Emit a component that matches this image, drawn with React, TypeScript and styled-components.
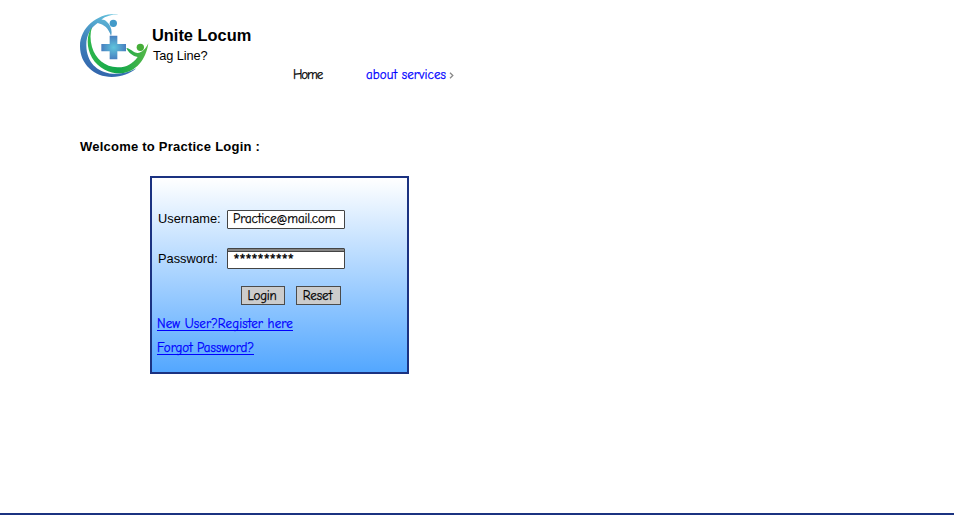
import React from "react";
import styled, { createGlobalStyle } from "styled-components";

const GlobalStyle = createGlobalStyle`
  * { box-sizing: border-box; }
  body { margin: 0; background: #fff; overflow: hidden; }
`;

const sans = `"Liberation Sans", Arial, sans-serif`;
const casual = `"Comic Sans MS", "Comic Neue", Lato, sans-serif`;

const Page = styled.div`
  display: flex;
  flex-direction: column;
  width: 954px;
  height: 526px;
  background: #fff;
  color: #000;
  font: 12px ${sans};
  white-space: nowrap;
`;

const Header = styled.header`
  display: flex;
  height: 86px;
  padding: 13px 0 0 80px;
`;

const Logo = styled.svg`
  width: 70px;
  height: 64px;
  flex: none;
`;

const Brand = styled.div`
  width: 141px;
  padding: 12px 0 0 2px;
`;

const BrandName = styled.h1`
  margin: 0;
  font: bold 16.4px/21px ${sans};
`;

const TagLine = styled.p`
  margin: 0 0 0 1px;
  font: 12.8px/19px ${sans};
  letter-spacing: -0.1px;
`;

const Nav = styled.nav`
  display: flex;
  align-items: center;
  height: 18px;
  margin: 53px 0 0 2px;
`;

const CasualText = styled.span<{ $spacing?: number }>`
  font: 13px/16px ${casual};
  letter-spacing: ${(p) => p.$spacing ?? 0}px;
  -webkit-text-stroke: 0.25px currentColor;
`;

const NavItem = styled(CasualText).attrs({ as: "a" })<{ $width: number; $link?: boolean }>`
  width: ${(p) => p.$width}px;
  color: ${(p) => (p.$link ? "#0000ff" : "#000")};
`;

const Chevron = styled.svg`
  width: 5px;
  height: 7px;
  margin-left: 3px;
`;

const Main = styled.main`
  flex: 1;
  padding: 51px 0 0 80px;
`;

const Welcome = styled.h2`
  margin: 0;
  font: bold 13px/19px ${sans};
  letter-spacing: 0.23px;
`;

const LoginPanel = styled.form`
  display: flex;
  flex-direction: column;
  width: 259px;
  height: 198px;
  margin: 20px 0 0 70px;
  padding: 32px 0 0 5px;
  border: 2px solid #1b3281;
  background: linear-gradient(#ffffff, #53a7ff);
`;

const Field = styled.label`
  display: flex;
  align-items: flex-start;
  height: 38px;
`;

const FieldName = styled.span<{ $drop?: number }>`
  width: 70px;
  padding: ${(p) => p.$drop ?? 0}px 0 0 1px;
  font: 12.8px/17px ${sans};
`;

const FieldBox = styled.span<{ $inset?: boolean }>`
  display: flex;
  align-items: ${(p) => (p.$inset ? "flex-start" : "center")};
  width: 118px;
  height: ${(p) => (p.$inset ? 21 : 19)}px;
  padding: 0 0 2px 5px;
  border: 1px solid #444;
  border-radius: 1px;
  background: ${(p) => (p.$inset ? "linear-gradient(#858585 2px, #444 2px, #444 3px, #fff 3px)" : "#fff")};
`;

const Mask = styled.span`
  padding: 4px 0 0 1px;
  font: 12.8px/12px ${sans};
  letter-spacing: 1.05px;
  -webkit-text-stroke: 0.4px #000;
`;

const Actions = styled.div`
  display: flex;
  gap: 11px;
  margin: 0 0 0 84px;
`;

const Action = styled.button<{ $width: number }>`
  display: flex;
  align-items: center;
  justify-content: center;
  width: ${(p) => p.$width}px;
  height: 19px;
  padding: 0 2px 0 0;
  border: 1px solid #4b4b4b;
  border-radius: 0;
  background: #ccc;
  color: #000;
`;

const PanelLink = styled(CasualText).attrs({ as: "a" })`
  align-self: flex-start;
  height: 15px;
  margin-bottom: 9px;
  border-bottom: 1px solid #0000ff;
  color: #0000ff;
`;

const Links = styled.div`
  display: flex;
  flex-direction: column;
  margin-top: 11px;
`;

const Footer = styled.footer`
  height: 13px;
  border-top: 2px solid #1b3281;
`;

function BrandLogo() {
  return (
    <Logo viewBox="30 24 210 192" aria-label="Unite Locum">
      <defs>
        <linearGradient id="ring" x1="0.7" y1="0" x2="0.4" y2="1">
          <stop offset="0" stopColor="#66c5df" />
          <stop offset="0.5" stopColor="#4186bd" />
          <stop offset="1" stopColor="#3265ac" />
        </linearGradient>
        <linearGradient id="leaf" x1="0" y1="0" x2="1" y2="0">
          <stop offset="0" stopColor="#2fb64b" />
          <stop offset="0.5" stopColor="#10a64b" />
          <stop offset="1" stopColor="#58b947" />
        </linearGradient>
        <radialGradient id="cross">
          <stop offset="0" stopColor="#5fc5dc" />
          <stop offset="1" stopColor="#487fc0" />
        </radialGradient>
      </defs>
      <path
        fill="url(#ring)"
        d="M146 28C91 21 30 62 30 124C30 178 73 216 125 216C156 216 181 206 199 190C178 202 153 208 128 206C79 202 50 169 49 122C48 93 61 69 83 54C102 58 116 70 123 93C128 77 122 61 111 51C105 45 98 43 93 44C107 34 125 28 146 28Z"
      />
      <path
        fill="url(#leaf)"
        d="M66 66C49 90 49 128 66 158C85 190 120 206 153 205C197 202 228 164 235 115C227 132 216 143 203 144C190 144 182 130 169 129C177 145 188 153 203 156C187 178 167 188 142 187C105 186 76 161 66 126C60 104 60 85 66 66Z"
      />
      <circle cx="130" cy="55" r="11" fill="#429ac9" />
      <circle cx="211" cy="127" r="11" fill="#45ad38" />
      <path fill="url(#cross)" d="M119 92H142V117H168V139H142V163H119V139H94V117H119Z" />
    </Logo>
  );
}

export default function App() {
  return (
    <>
      <GlobalStyle />
      <Page>
        <Header>
          <BrandLogo />
          <Brand>
            <BrandName>Unite Locum</BrandName>
            <TagLine>Tag Line?</TagLine>
          </Brand>
          <Nav>
            <NavItem $width={73} $spacing={-1.1}>Home</NavItem>
            <NavItem $width={80} $link $spacing={0.08}>about services</NavItem>
            <Chevron viewBox="0 0 5 7">
              <path d="M1 .8L3.8 3.5L1 6.2" fill="none" stroke="#888" strokeWidth="1.3" />
            </Chevron>
          </Nav>
        </Header>
        <Main>
          <Welcome>Welcome to Practice Login :</Welcome>
          <LoginPanel>
            <Field>
              <FieldName>Username:</FieldName>
              <FieldBox>
                <CasualText $spacing={-0.13}>Practice@mail.com</CasualText>
              </FieldBox>
            </Field>
            <Field>
              <FieldName $drop={2}>Password:</FieldName>
              <FieldBox $inset>
                <Mask>**********</Mask>
              </FieldBox>
            </Field>
            <Actions>
              <Action type="button" $width={44}><CasualText $spacing={-0.2}>Login</CasualText></Action>
              <Action type="button" $width={45}><CasualText>Reset</CasualText></Action>
            </Actions>
            <Links>
              <PanelLink $spacing={0.12}>New User?Register here</PanelLink>
              <PanelLink>Forgot Password?</PanelLink>
            </Links>
          </LoginPanel>
        </Main>
        <Footer />
      </Page>
    </>
  );
}
